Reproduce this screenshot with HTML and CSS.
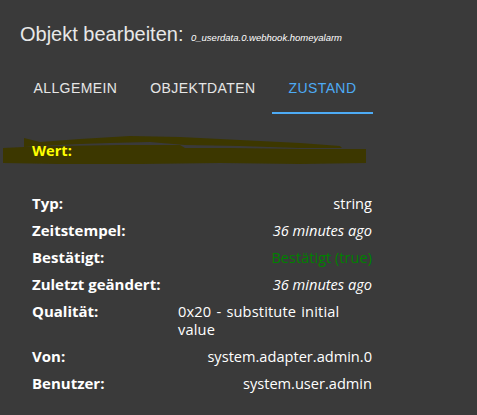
FILE: index.html
```html
<!DOCTYPE html>
<html>
<head>
<meta charset="utf-8">
<link rel="stylesheet" href="styles.css">
</head>
<body>
<div class="dialog">
  <h1 class="title">Objekt bearbeiten: <span class="oid">0_userdata.0.webhook.homeyalarm</span></h1>
  <div class="tabs">
    <div class="tab">ALLGEMEIN</div>
    <div class="tab">OBJEKTDATEN</div>
    <div class="tab active">ZUSTAND</div>
  </div>
  <div class="content">
    <div class="wert">Wert:</div>
    <svg class="scribble" width="370" height="32" viewBox="0 0 370 32">
      <polygon fill="#3c3700" points="3,14 24,13 60,12 120,11 180,11 185,14 230,14 300,15 366,15 366,29 300,30 220,29 140,30 60,30 3,29"/>
      <polygon fill="#3c3700" points="24,4 40,8 80,5 130,2 180,3 240,6 300,9 340,12 342,14 300,14 240,12 185,11 150,8 110,9 80,10 40,12 24,13"/>
    </svg>
    <table class="info">
      <tr><td class="lbl">Typ:</td><td class="val"><span>string</span></td></tr>
      <tr><td class="lbl">Zeitstempel:</td><td class="val"><span class="it">36 minutes ago</span></td></tr>
      <tr><td class="lbl">Bestätigt:</td><td class="val"><span class="ack">Bestätigt (true)</span></td></tr>
      <tr><td class="lbl">Zuletzt geändert:</td><td class="val"><span class="it">36 minutes ago</span></td></tr>
      <tr><td class="lbl">Qualität:</td><td class="val"><span class="q">0x20 - substitute initial value</span></td></tr>
      <tr><td class="lbl">Von:</td><td class="val"><span>system.adapter.admin.0</span></td></tr>
      <tr><td class="lbl">Benutzer:</td><td class="val"><span>system.user.admin</span></td></tr>
    </table>
  </div>
</div>
</body>
</html>
```
FILE: styles.css
```css
html, body {
  margin: 0;
  padding: 0;
  background: #3a3a3a;
}
.dialog {
  width: 477px;
  height: 415px;
  background: #3a3a3a;
  color: #e6e6e6;
  font-family: "Liberation Sans", Arial, sans-serif;
  box-sizing: border-box;
}
.title {
  margin: 0;
  padding: 22px 20px 0 20px;
  font-size: 20px;
  font-weight: normal;
  line-height: 24px;
  color: #e8e8e8;
}
.oid {
  font-size: 9.5px;
  font-style: italic;
  color: #ffffff;
  margin-left: 2px;
}
.tabs {
  display: flex;
  margin-top: 14px;
  padding-left: 17px;
  height: 48px;
}
.tab {
  padding: 0 16.5px;
  font-size: 14px;
  letter-spacing: 0.4px;
  line-height: 48px;
  color: #e6e6e6;
  border-bottom: 2px solid transparent;
  box-sizing: border-box;
  height: 50px;
}
.tab.active {
  color: #4dabf5;
  border-bottom-color: #4dabf5;
}
.content {
  position: relative;
  padding: 28px 0 0 32px;
  font-family: "Open Sans", "Noto Sans", sans-serif;
  font-size: 14.6px;
}
.wert {
  position: relative;
  z-index: 1;
  color: #ffff00;
  font-weight: bold;
  font-size: 14.6px;
  line-height: 20px;
}
.scribble {
  position: absolute;
  left: 0;
  top: 22px;
}
.info {
  margin-top: 34px;
  border-collapse: collapse;
  width: 340px;
}
.info td {
  padding: 0 0 9px 0;
  vertical-align: top;
  line-height: 18px;
  color: #ffffff;
}
.lbl {
  font-weight: bold;
  font-size: 15px;
  width: 146px;
}
.val {
  text-align: right;
  width: 194px;
}
.val span {
  display: inline-block;
  text-align: left;
}
.val .q {
  word-spacing: 1.2px;
  letter-spacing: 0.15px;
}
.it {
  font-style: italic;
}
.ack {
  color: #008000;
}
```
